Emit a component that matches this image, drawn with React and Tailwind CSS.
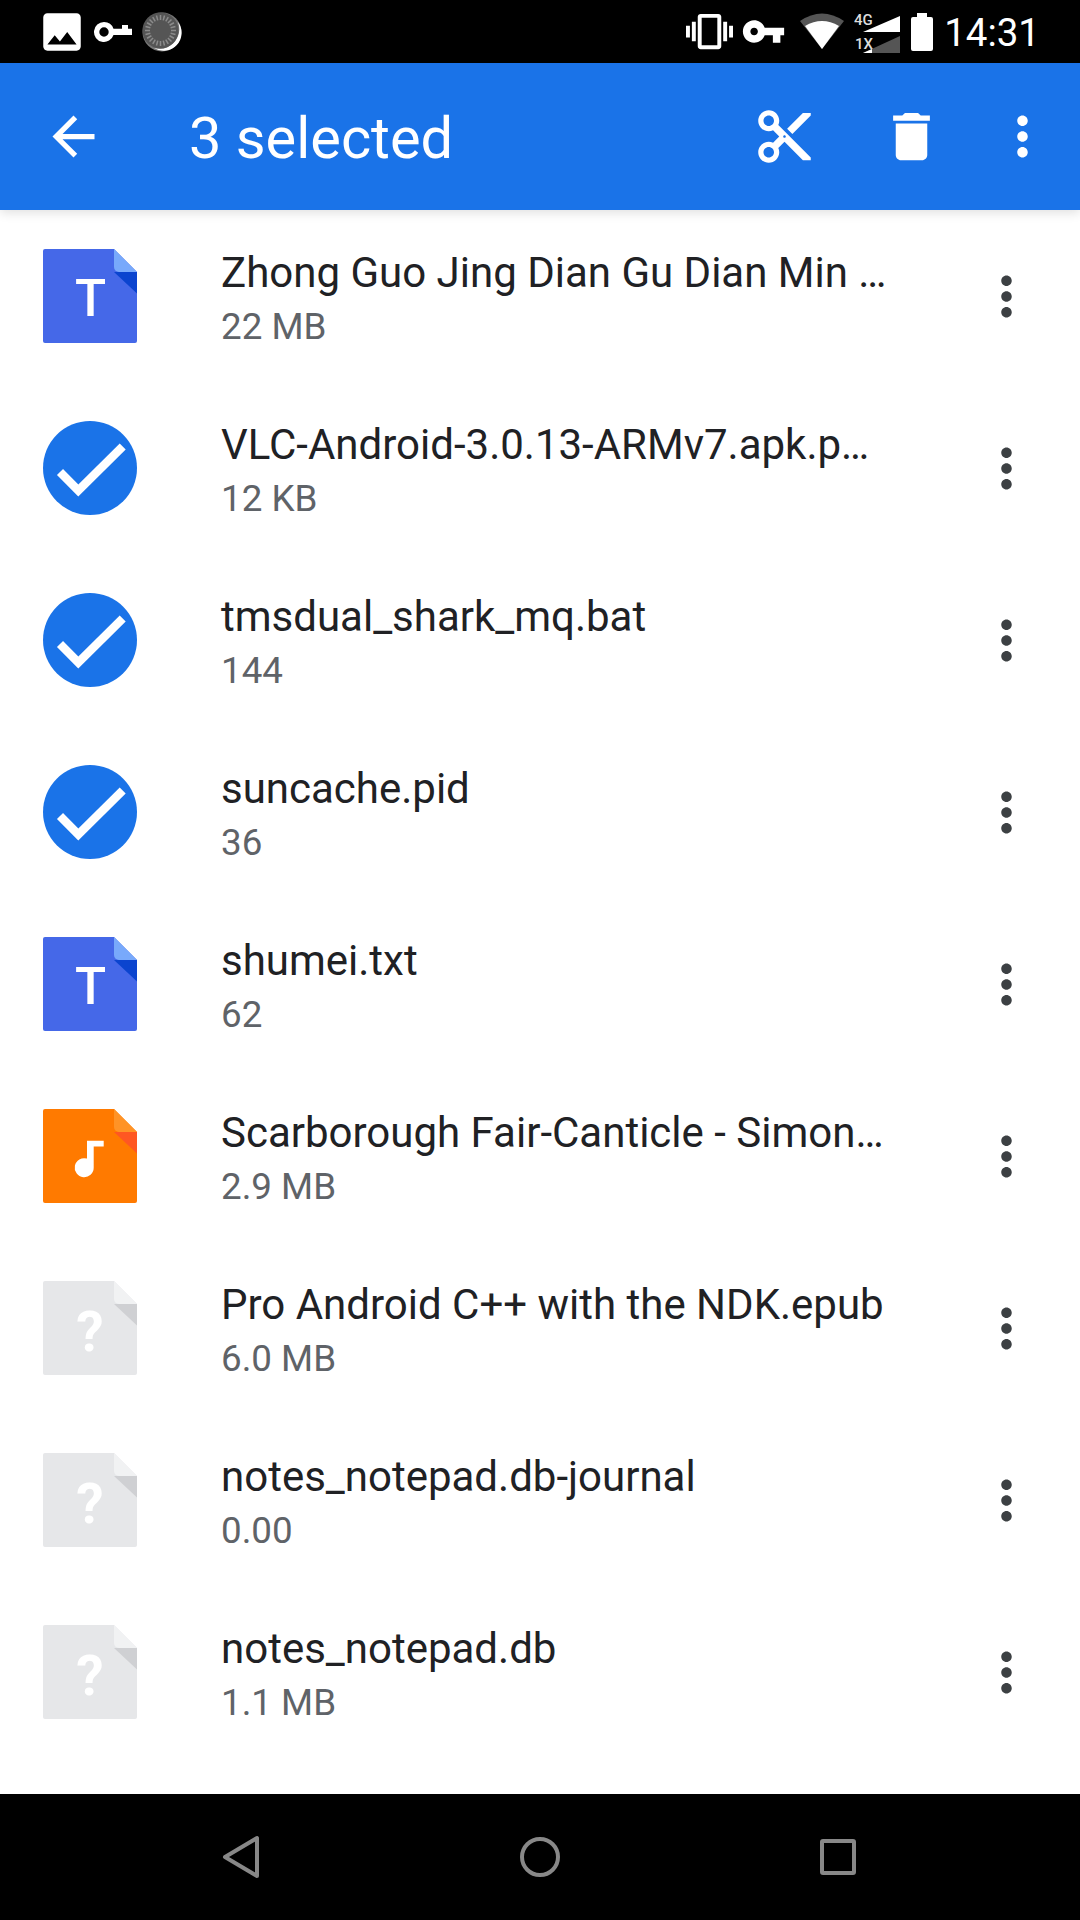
import React from "react";

const files = [
  { name: "Zhong Guo Jing Dian Gu Dian Min …", size: "22 MB", type: "text" },
  { name: "VLC-Android-3.0.13-ARMv7.apk.p…", size: "12 KB", type: "check" },
  { name: "tmsdual_shark_mq.bat", size: "144", type: "check" },
  { name: "suncache.pid", size: "36", type: "check" },
  { name: "shumei.txt", size: "62", type: "text" },
  { name: "Scarborough Fair-Canticle - Simon…", size: "2.9 MB", type: "audio" },
  { name: "Pro Android C++ with the NDK.epub", size: "6.0 MB", type: "unknown" },
  { name: "notes_notepad.db-journal", size: "0.00", type: "unknown" },
  { name: "notes_notepad.db", size: "1.1 MB", type: "unknown" },
];

const MORE_PATH =
  "M12 8c1.1 0 2-.9 2-2s-.9-2-2-2-2 .9-2 2 .9 2 2 2zm0 2c-1.1 0-2 .9-2 2s.9 2 2 2 2-.9 2-2-.9-2-2-2zm0 6c-1.1 0-2 .9-2 2s.9 2 2 2 2-.9 2-2-.9-2-2-2z";

const colors = {
  text: { main: "#4568e8", fold: "#78a9fb", dark: "#0b44cf" },
  audio: { main: "#ff7a00", fold: "#ff9326", dark: "#ff5722" },
  unknown: { main: "#e6e7e9", fold: "#f1f2f3", dark: "#cfd0d3" },
};

const Icon24 = ({ d, size = 63, className = "", fillRule }) => (
  <svg viewBox="0 0 24 24" width={size} height={size} className={`shrink-0 ${className}`} fill="currentColor">
    <path d={d} fillRule={fillRule} />
  </svg>
);

const FileIcon = ({ type }) => {
  if (type === "check") {
    return (
      <svg width="94" height="94" viewBox="0 0 94 94" className="shrink-0">
        <circle cx="47" cy="47" r="47" fill="#1a73e8" />
        <polyline points="17,51 35.3,69.5 79.7,25.5" fill="none" stroke="#ffffff" strokeWidth="8.5" />
      </svg>
    );
  }
  const c = colors[type];
  return (
    <svg width="94" height="94" viewBox="0 0 94 94" className="shrink-0">
      <path d="M2 0H71L94 23V92a2 2 0 0 1-2 2H2a2 2 0 0 1-2-2V2a2 2 0 0 1 2-2z" fill={c.main} />
      <path d="M71 23H94V44.5z" fill={c.dark} />
      <path d="M71 0L94 23H76a5 5 0 0 1-5-5z" fill={c.fold} />
      {type === "text" && (
        <text x="47.5" y="67" textAnchor="middle" fontSize="51" fontWeight="500" fill="#ffffff" className="font-['Roboto',sans-serif]">
          T
        </text>
      )}
      {type === "audio" && (
        <path d="M44 31.7H60.7V37.5H50.7V58.7a9.5 9.5 0 1 1-6.7-9.1z" fill="#ffffff" />
      )}
      {type === "unknown" && (
        <text x="47" y="70" textAnchor="middle" fontSize="55" fontWeight="700" fill="#ffffff" className="font-['Roboto',sans-serif]">
          ?
        </text>
      )}
    </svg>
  );
};

const FileRow = ({ file }) => (
  <div className="flex h-[172px] items-center pl-[42.5px]">
    <FileIcon type={file.type} />
    <div className="ml-[84.5px] flex w-[680px] flex-col pt-[4px]">
      <div className="whitespace-nowrap text-[42px] leading-[50px] text-[#202124]">{file.name}</div>
      <div className="mt-[7px] text-[36.75px] leading-[44px] text-[#5f6368]">{file.size}</div>
    </div>
    <Icon24 d={MORE_PATH} className="ml-[74px] text-[#3c4043]" />
  </div>
);

const LoadingDisc = () => (
  <svg width="40" height="40" viewBox="0 0 40 40" className="shrink-0">
    <circle cx="20" cy="20" r="19.5" fill="#777777" />
    <path d="M36 10A18 18 0 0 1 12 36A20 20 0 0 0 36 10z" fill="#ffffff" />
    <circle cx="18.5" cy="18.5" r="18" fill="#555555" />
    {Array.from({ length: 24 }).map((_, i) => (
      <line key={i} x1="18.5" y1="3" x2="18.5" y2="8" stroke="#8c8c8c" strokeWidth="1.5" transform={`rotate(${i * 15} 18.5 18.5)`} />
    ))}
  </svg>
);

const StatusBar = () => (
  <div className="flex h-[63px] items-center justify-between bg-black pl-[37px] pr-[40px] text-white">
    <div className="flex items-center">
      <Icon24 size={50} fillRule="evenodd" d="M21 19V5c0-1.1-.9-2-2-2H5c-1.1 0-2 .9-2 2v14c0 1.1.9 2 2 2h14c1.1 0 2-.9 2-2zM8.5 13.5l2.5 3.01L14.5 12l4.5 6H5l3.5-4.5z" />
      <svg width="40" height="22" viewBox="0 0 40 22" className="ml-[6px] shrink-0" fill="#ffffff">
        <path fillRule="evenodd" d="M11 1a10 10 0 0 1 9.5 6.8H39V14H20.5A10 10 0 1 1 11 1zm0 5.3a4.7 4.7 0 1 0 0 9.4 4.7 4.7 0 0 0 0-9.4z" />
        <rect x="29" y="4" width="6" height="5" />
      </svg>
      <div className="ml-[9px]">
        <LoadingDisc />
      </div>
    </div>
    <div className="flex items-center">
      <Icon24 size={47} d="M0 15h2V9H0v6zm3 2h2V7H3v10zm19-8v6h2V9h-2zm-3 8h2V7h-2v10zM16.5 3h-9C6.67 3 6 3.67 6 4.5v15c0 .83.67 1.5 1.5 1.5h9c.83 0 1.5-.67 1.5-1.5v-15c0-.83-.67-1.5-1.5-1.5zM16 19H8V5h8v14z" />
      <Icon24 size={45} className="ml-[8px]" d="M12.65 10C11.83 7.67 9.61 6 7 6c-3.31 0-6 2.69-6 6s2.69 6 6 6c2.61 0 4.83-1.67 5.65-4H17v4h4v-4h2v-4H12.65zM7 14c-1.1 0-2-.9-2-2s.9-2 2-2 2 .9 2 2-.9 2-2 2z" />
      <svg width="46" height="37" viewBox="0 0 46 37" className="ml-[13px] mt-[-1px] shrink-0">
        <path d="M23 36L1 8Q23-7 45 8z" fill="#555555" />
        <path d="M23 36L6 13Q23 3 40 13z" fill="#ffffff" />
      </svg>
      <svg width="47" height="44" viewBox="0 0 47 44" className="ml-[9px] mt-[2px] shrink-0">
        <path d="M9 21L46 5V21z" fill="#ffffff" />
        <path d="M9 42L46 25V42z" fill="#555555" />
        <path d="M9 42L18 38V42z" fill="#ffffff" />
        <text x="0" y="14" fontSize="15" fontWeight="500" fill="#dddddd" className="font-['Roboto',sans-serif]">4G</text>
        <text x="1" y="38" fontSize="15" fontWeight="500" fill="#dddddd" className="font-['Roboto',sans-serif]">1X</text>
      </svg>
      <svg width="22" height="38" viewBox="0 0 22 38" className="ml-[10px] shrink-0" fill="#ffffff">
        <path d="M6 0H16V4H20a2 2 0 0 1 2 2V36a2 2 0 0 1-2 2H2a2 2 0 0 1-2-2V6a2 2 0 0 1 2-2H6z" />
      </svg>
      <span className="ml-[11px] pt-[3px] font-['Roboto',sans-serif] text-[38.5px] leading-none">14:31</span>
    </div>
  </div>
);

const Toolbar = () => (
  <div className="relative z-10 flex h-[147px] items-center bg-[#1a73e8] pl-[42px] text-white shadow-[0_3px_10px_rgba(0,0,0,0.12)]">
    <Icon24 d="M20 11H7.83l5.59-5.59L12 4l-8 8 8 8 1.41-1.41L7.83 13H20v-2z" />
    <div className="ml-[84px] w-[564px] pt-[4px] text-[57.75px] leading-none">3 selected</div>
    <Icon24 d="M9.64 7.64c.23-.5.36-1.05.36-1.64 0-2.21-1.79-4-4-4S2 3.79 2 6s1.79 4 4 4c.59 0 1.14-.13 1.64-.36L10 12l-2.36 2.36C7.14 14.13 6.59 14 6 14c-2.21 0-4 1.79-4 4s1.79 4 4 4 4-1.79 4-4c0-.59-.13-1.14-.36-1.64L12 14l7 7h3v-1L9.64 7.64zM6 8c-1.1 0-2-.89-2-2s.9-2 2-2 2 .89 2 2-.9 2-2 2zm0 12c-1.1 0-2-.89-2-2s.9-2 2-2 2 .89 2 2-.9 2-2 2zm6-7.5c-.28 0-.5-.22-.5-.5s.22-.5.5-.5.5.22.5.5-.22.5-.5.5zM19 3l-6 6 2 2 7-7V3z" />
    <Icon24 className="ml-[64px]" d="M6 19c0 1.1.9 2 2 2h8c1.1 0 2-.9 2-2V7H6v12zM19 4h-3.5l-1-1h-5l-1 1H5v2h14V4z" />
    <Icon24 className="ml-[48px]" d={MORE_PATH} />
  </div>
);

const NavBar = () => (
  <div className="flex h-[126px] items-center justify-center gap-[259px] bg-black">
    <svg width="40" height="44" viewBox="0 0 40 44" fill="none" stroke="#888888" strokeWidth="4" strokeLinejoin="round">
      <path d="M36 3V41L4 22z" />
    </svg>
    <svg width="40" height="44" viewBox="0 0 40 44" fill="none" stroke="#888888" strokeWidth="4">
      <circle cx="20" cy="22" r="18" />
    </svg>
    <svg width="40" height="44" viewBox="0 0 40 44" fill="none" stroke="#888888" strokeWidth="4" strokeLinejoin="round">
      <rect x="3" y="6" width="32" height="32" rx="1" />
    </svg>
  </div>
);

const App = () => (
  <div className="flex h-[1920px] w-[1080px] flex-col overflow-hidden bg-white font-['Roboto',sans-serif]">
    <StatusBar />
    <Toolbar />
    <div className="flex-1">
      {files.map((file) => (
        <FileRow key={file.name} file={file} />
      ))}
    </div>
    <NavBar />
  </div>
);

export default App;
